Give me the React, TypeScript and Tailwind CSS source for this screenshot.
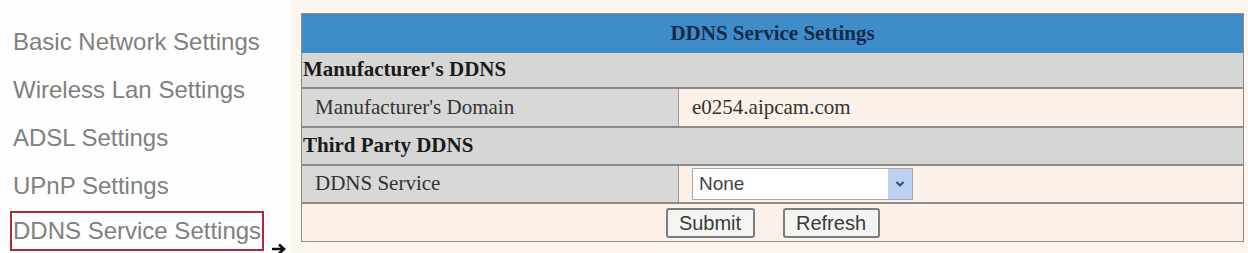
import React from "react";

const navItems = [
  "Basic Network Settings",
  "Wireless Lan Settings",
  "ADSL Settings",
  "UPnP Settings",
];

export default function App() {
  return (
    <div className="flex h-[253px] w-[1248px] overflow-hidden bg-[#fdf6ef]">
      {/* Sidebar */}
      <aside className="w-[290px] shrink-0 bg-[#fefefe] pt-[18px] font-['Liberation_Sans',Arial,sans-serif] text-[24px] text-[#808080]">
        {navItems.map((item) => (
          <div key={item} className="h-[48px] pl-[13px] leading-[48px] whitespace-nowrap">
            {item}
          </div>
        ))}
        <div className="flex h-[48px] items-start pl-[10px] pt-[1px]">
          <span className="inline-block border-2 border-[#b0283c] px-[1px] leading-[36px] whitespace-nowrap">
            DDNS Service Settings
          </span>
          <svg className="ml-[7px] mt-[32px] h-[12px] w-[16px] shrink-0" viewBox="0 0 16 12">
            <path d="M1 6h11M8 1.5l5 4.5-5 4.5" fill="none" stroke="#111" strokeWidth={2.6} />
          </svg>
        </div>
      </aside>

      {/* Main */}
      <main className="flex-1 pt-[13px] pl-[11px] pr-[4px]">
        <div className="border border-[#8c8c8c] font-['Liberation_Serif','Times_New_Roman',serif] text-[21px] text-[#333]">
          <div className="flex h-[39px] items-center justify-center bg-[#3e8dc9] font-bold text-[#15294a]">
            DDNS Service Settings
          </div>
          <div className="flex h-[36px] items-center border-b-2 border-[#8a8a8a] bg-[#d6d6d4] pl-[1px] font-bold text-[#1a1a1a]">
            Manufacturer's DDNS
          </div>
          <div className="flex h-[39px] border-b-2 border-[#8a8a8a]">
            <div className="flex w-[377px] items-center border-r border-[#9a9a9a] bg-[#d8d8d6] pl-[13px]">
              Manufacturer's Domain
            </div>
            <div className="flex flex-1 items-center bg-[#fbf1e8] pl-[13px]">e0254.aipcam.com</div>
          </div>
          <div className="flex h-[38px] items-center border-b-2 border-[#8a8a8a] bg-[#d6d6d4] pl-[1px] font-bold text-[#1a1a1a]">
            Third Party DDNS
          </div>
          <div className="flex h-[38px] border-b-2 border-[#8a8a8a]">
            <div className="flex w-[377px] items-center border-r border-[#9a9a9a] bg-[#d8d8d6] pl-[13px]">
              DDNS Service
            </div>
            <div className="flex flex-1 items-center bg-[#fbf1e8] pl-[13px]">
              <div className="flex h-[32px] w-[221px] items-center border border-[#a9a9a9] bg-white font-['Liberation_Sans',Arial,sans-serif] text-[19px] text-[#444]">
                <span className="flex-1 pl-[6px]">None</span>
                <span className="flex h-full w-[24px] items-center justify-center bg-[#bcd1ef]">
                  <svg className="h-[8px] w-[10px]" viewBox="0 0 10 8">
                    <path d="M1.5 2l3.5 3.5L8.5 2" fill="none" stroke="#2c4c86" strokeWidth={2} />
                  </svg>
                </span>
              </div>
            </div>
          </div>
          <div className="flex h-[37px] items-center justify-center gap-[28px] bg-[#fbf1e8] font-['Liberation_Sans',Arial,sans-serif] text-[20px] text-[#3a3a3a]">
            <button className="h-[30px] w-[89px] rounded-[3px] border-2 border-[#7d7d7d] bg-[#f4f4f2] leading-none">
              Submit
            </button>
            <button className="h-[30px] w-[97px] rounded-[3px] border-2 border-[#7d7d7d] bg-[#f4f4f2] leading-none">
              Refresh
            </button>
          </div>
        </div>
      </main>
    </div>
  );
}
